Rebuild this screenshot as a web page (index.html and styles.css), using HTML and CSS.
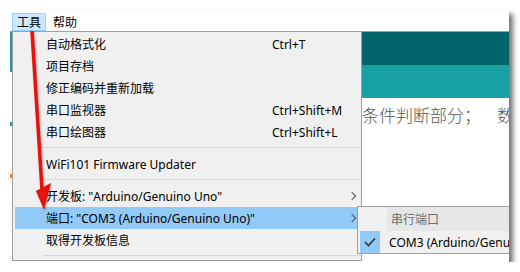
FILE: index.html
```html
<!DOCTYPE html>
<html>
<head lang="zh">
    <meta charset="UTF-8">
    <title>工具菜单</title>
    <link rel="stylesheet" href="styles.css">
</head>
<body>
    <div class="shot">
        <div class="menubar">
            <span class="menu active">工具</span>
            <span class="menu">帮助</span>
        </div>
        <div class="main">
            <div class="edge"></div>
            <div class="dropdown">
                <div class="item"><span class="label">自动格式化</span><span class="key">Ctrl+T</span></div>
                <div class="item"><span class="label">项目存档</span></div>
                <div class="item"><span class="label">修正编码并重新加载</span></div>
                <div class="item"><span class="label">串口监视器</span><span class="key">Ctrl+Shift+M</span></div>
                <div class="item"><span class="label">串口绘图器</span><span class="key">Ctrl+Shift+L</span></div>
                <div class="sep"></div>
                <div class="item"><span class="label">WiFi101 Firmware Updater</span></div>
                <div class="sep"></div>
                <div class="item"><span class="label">开发板: "Arduino/Genuino Uno"</span><span class="more"></span></div>
                <div class="item hover"><span class="label">端口: "COM3 (Arduino/Genuino Uno)"</span><span class="more"></span></div>
                <div class="item"><span class="label">取得开发板信息</span></div>
                <div class="sep last"></div>
            </div>
            <div class="editor">
                <div class="bar dark"></div>
                <div class="bar light"></div>
                <p class="code">条件判断部分；<span class="next">数</span></p>
            </div>
        </div>
        <div class="submenu">
            <div class="sub-row head"><span class="tick"></span><span class="sub-label">串行端口</span></div>
            <div class="sub-row">
                <span class="tick on">
                    <svg width="12" height="10" viewBox="0 0 12 10"><polyline points="1,5 4.5,8.5 11,1.5" fill="none" stroke="#333" stroke-width="1.6"/></svg>
                </span>
                <span class="sub-label">COM3 (Arduino/Genuino Uno)</span>
            </div>
        </div>
        <svg class="arrow" width="60" height="220" viewBox="0 0 60 220">
            <line x1="22" y1="21" x2="32" y2="180" stroke="#e8110f" stroke-width="3.5"/>
            <polygon points="26,181 41,173 34,200" fill="#e8110f"/>
        </svg>
    </div>
</body>
</html>
```

FILE: styles.css
```css
*{
    margin: 0;
    padding: 0;
}
body{
    background: #fff;
    font-family: "Noto Sans", "Noto Sans CJK SC", sans-serif;
    font-size: 12px;
    color: #000;
}
.shot{
    position: relative;
    margin: 10px 0 0 10px;
    width: 499px;
    height: 252px;
    overflow: hidden;
    background: #fff;
    box-shadow: 4px 4px 5px rgba(0,0,0,.55);
}
.menubar{
    display: flex;
    gap: 2px;
    height: 22px;
    padding: 3px 0 0 2px;
    box-sizing: border-box;
    border-bottom: 1px solid #a0a0a0;
}
.menu{
    height: 18px;
    line-height: 17px;
    padding: 0 4px;
    border: 1px solid transparent;
    box-sizing: border-box;
}
.menu.active{
    background: #cce8ff;
    border-color: #99d1ff;
}
.main{
    display: flex;
    height: 229px;
}
.edge{
    flex: none;
    width: 2px;
    background: linear-gradient(#1a9ea2 0, #1a9ea2 40px, #fff 40px, #fff 90px, #1a9ea2 90px, #1a9ea2 94px, #fff 94px, #fff 142px, #f08020 142px, #f08020 146px, #fff 146px);
}
.dropdown{
    flex: none;
    width: 350px;
    box-sizing: border-box;
    background: #f0f0f0;
    border-left: 1px solid #a0a0a0;
    border-right: 1px solid #a0a0a0;
    border-bottom: 1px solid #a0a0a0;
    padding: 1px 0 0 2px;
}
.item{
    display: grid;
    grid-template-columns: 31px 226px 1fr 14px;
    align-items: center;
    height: 22px;
}
.item .label{
    grid-row: 1;
    grid-column: 2 / 4;
    white-space: nowrap;
}
.item .key{
    grid-row: 1;
    grid-column: 3;
}
.item .more{
    grid-row: 1;
    grid-column: 4;
    width: 5px;
    height: 5px;
    border-right: 1px solid #555;
    border-top: 1px solid #555;
    transform: rotate(45deg);
    margin-left: 2px;
}
.item.hover{
    background: #91c9f7;
}
.sep{
    height: 10px;
    margin-left: 28px;
    background: linear-gradient(transparent 4px, #d7d7d7 4px, #d7d7d7 5px, transparent 5px);
}
.editor{
    flex: 1;
    min-width: 0;
    display: flex;
    flex-direction: column;
}
.bar{
    height: 33px;
}
.bar.dark{
    background: #006468;
}
.bar.light{
    background: #17a1a5;
}
.code{
    margin: 4px 0 0 0;
    font-family: "Noto Sans CJK SC", serif;
    font-weight: 300;
    font-size: 17px;
    color: #555;
    white-space: nowrap;
}
.code .next{
    margin-left: 16px;
}
.submenu{
    position: absolute;
    left: 347px;
    top: 196px;
    width: 200px;
    border: 1px solid #a0a0a0;
    background: #f0f0f0;
}
.sub-row{
    display: flex;
    align-items: center;
    height: 22px;
    padding-left: 2px;
}
.sub-row.head{
    height: 24px;
    background: linear-gradient(90deg, #f0f0f0 29px, #e6e6e6 29px);
}
.tick{
    width: 22px;
    height: 22px;
    display: flex;
    align-items: center;
    justify-content: center;
}
.tick.on{
    background: #91c9f7;
}
.sub-label{
    margin-left: 9px;
    white-space: nowrap;
}
.head .sub-label{
    color: #6d6d6d;
}
.arrow{
    position: absolute;
    left: 0;
    top: 0;
    filter: drop-shadow(1px 1px 1px rgba(0,0,0,.3));
}
```
